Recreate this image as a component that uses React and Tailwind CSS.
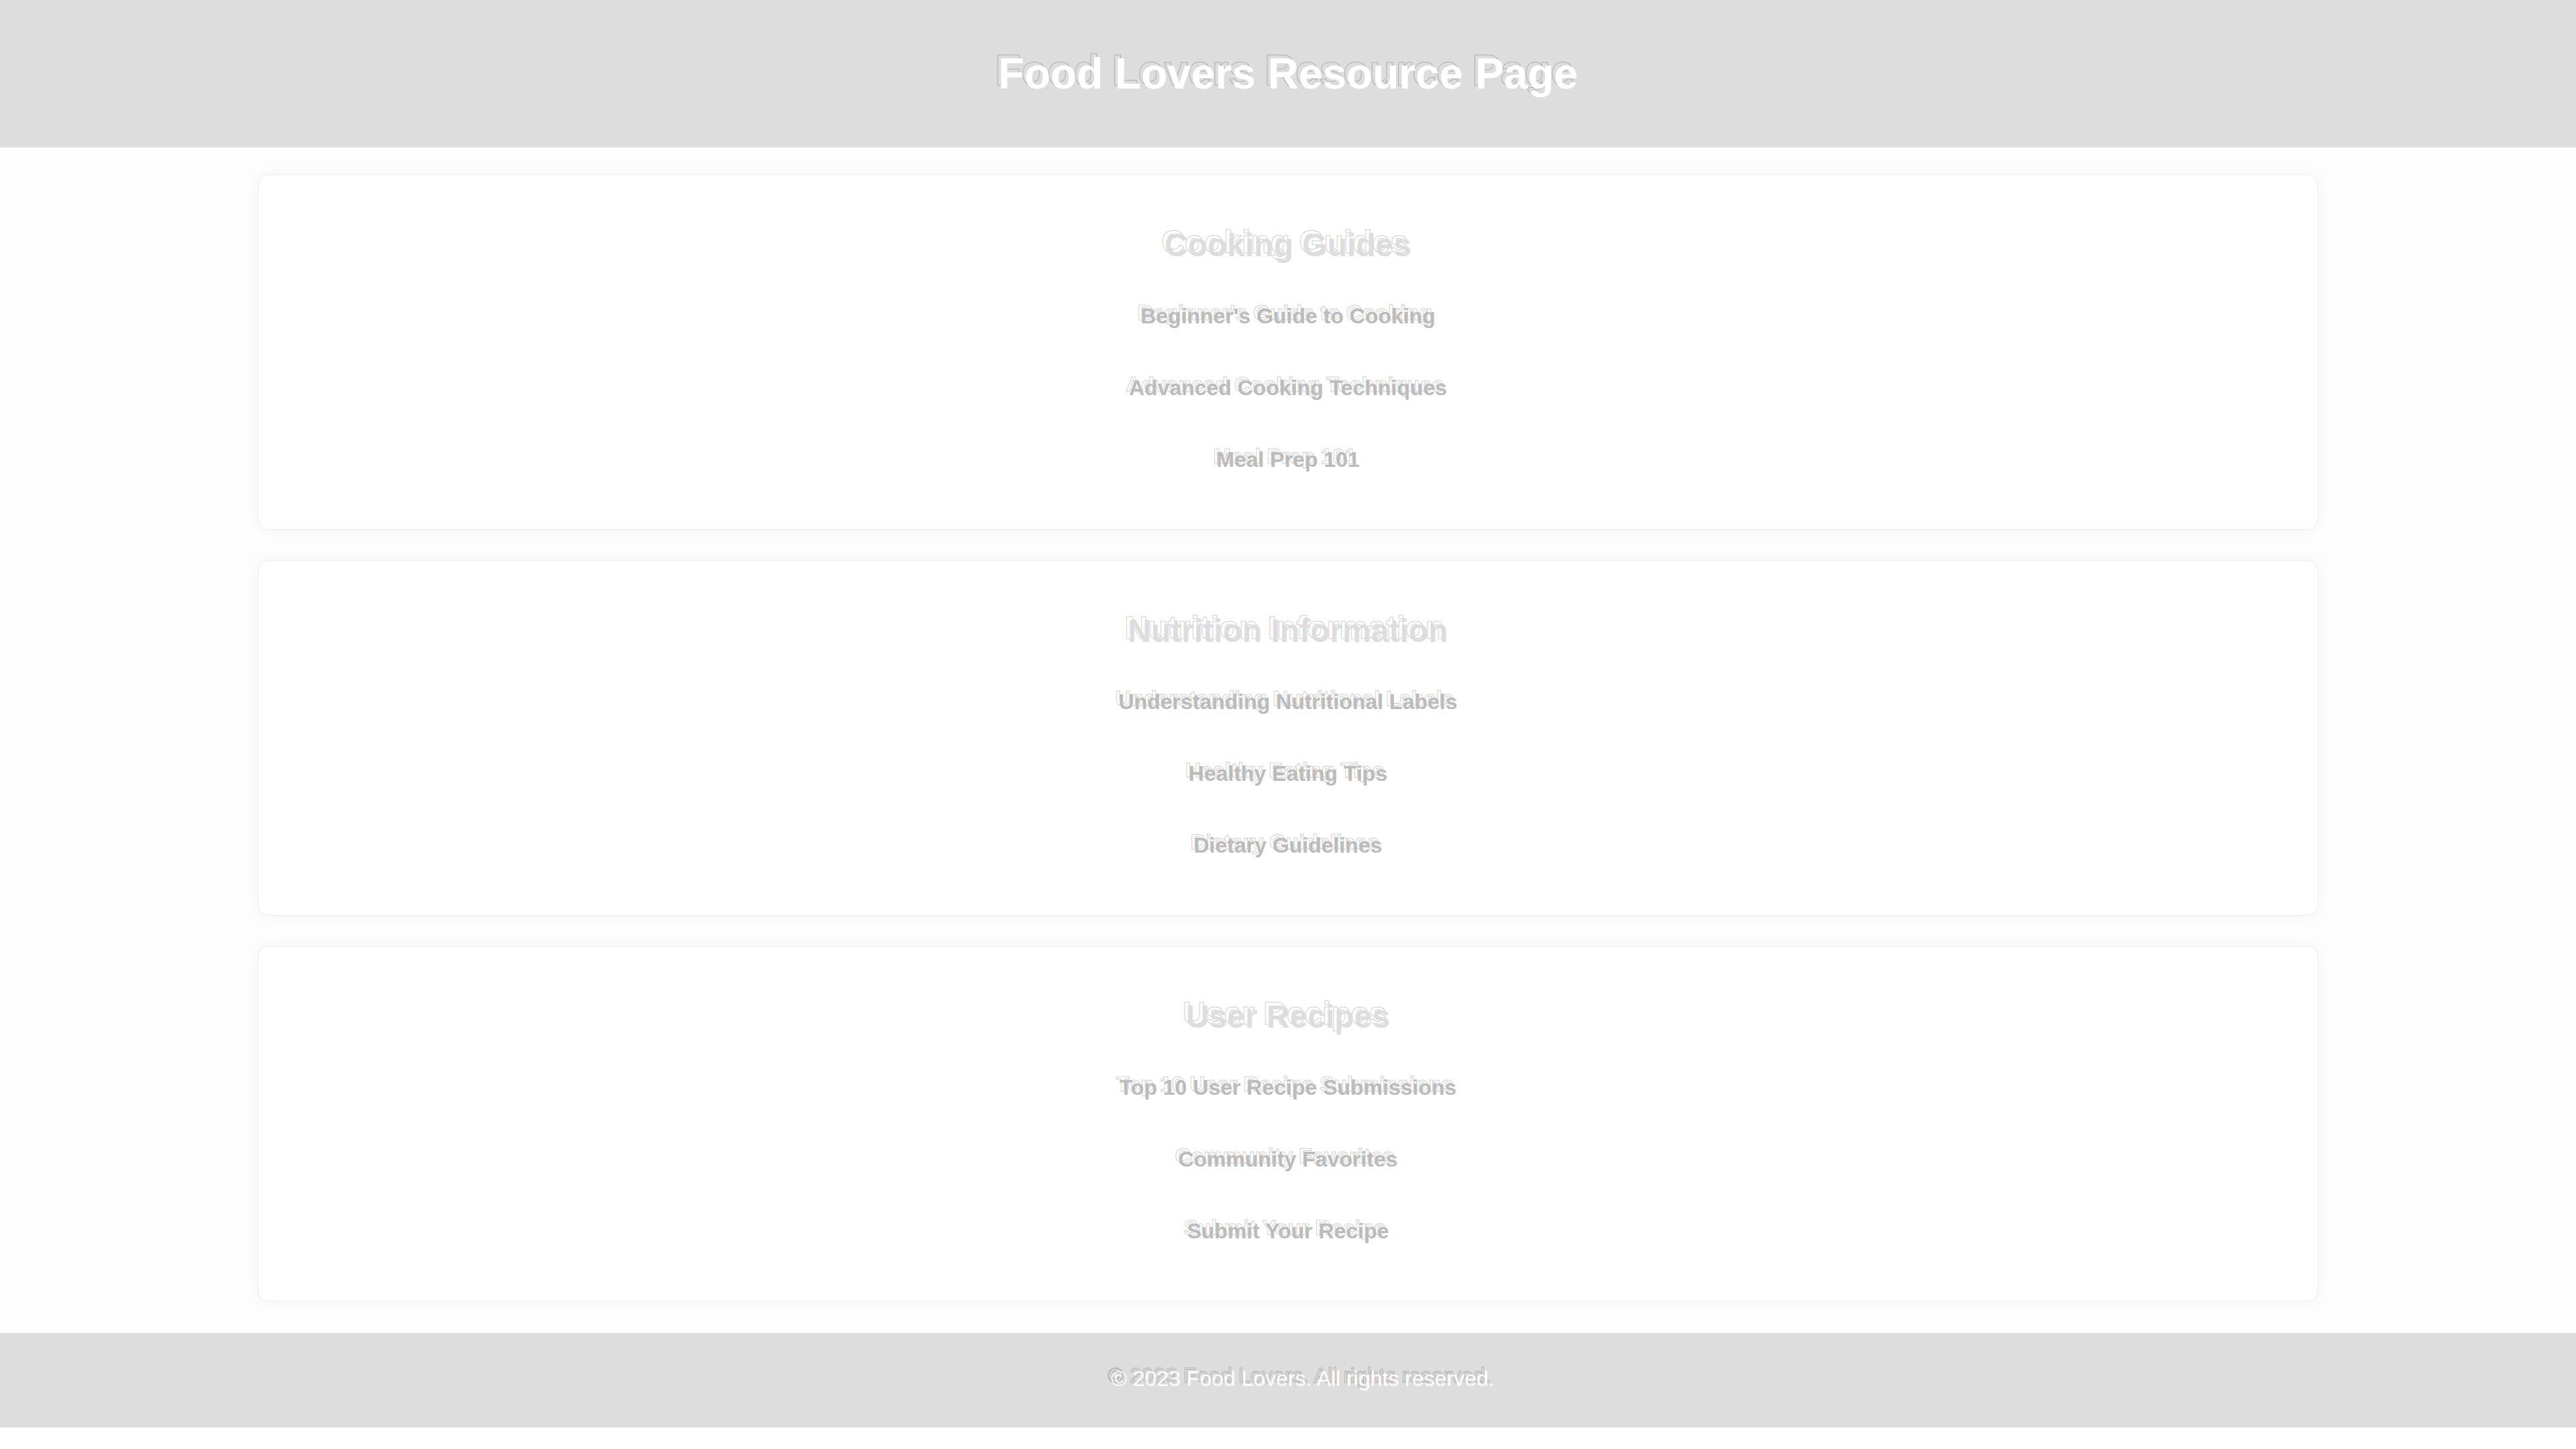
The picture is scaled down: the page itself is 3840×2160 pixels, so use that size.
import React from "react";

const sections = [
  {
    title: "Cooking Guides",
    links: ["Beginner's Guide to Cooking", "Advanced Cooking Techniques", "Meal Prep 101"],
  },
  {
    title: "Nutrition Information",
    links: ["Understanding Nutritional Labels", "Healthy Eating Tips", "Dietary Guidelines"],
  },
  {
    title: "User Recipes",
    links: ["Top 10 User Recipe Submissions", "Community Favorites", "Submit Your Recipe"],
  },
];

function Ghost({ text, className = "" }) {
  return (
    <span
      data-text={text}
      className={
        "relative isolate inline-block whitespace-nowrap before:content-[attr(data-text)] before:absolute before:left-[-5px] before:top-[-5px] before:-z-10 before:whitespace-nowrap before:text-transparent before:[-webkit-text-stroke:1px_rgba(0,0,0,0.22)] " +
        className
      }
    >
      {text}
    </span>
  );
}

export default function App() {
  return (
    <div className="min-h-[2160px] bg-white font-['Liberation_Sans',Arial,sans-serif]">
      <header className="bg-[#dddddd] pt-[73px] pb-[73px] text-center">
        <h1 className="text-[64px] leading-[74px] font-bold text-white">
          <Ghost text="Food Lovers Resource Page" />
        </h1>
      </header>
      <main className="bg-[#fdfdfd] pt-[40px] pb-[47px] flex flex-col gap-[45px]">
        {sections.map((s) => (
          <section
            key={s.title}
            className="mx-auto w-[3072px] h-[530px] bg-white rounded-[16px] border border-[#ececec] shadow-[0_0_20px_rgba(0,0,0,0.04)] pt-[77px] flex flex-col items-center text-center"
          >
            <h2 className="text-[48px] leading-[55px] font-bold text-[#dddddd]">
              <Ghost text={s.title} />
            </h2>
            <ul className="mt-[60px] flex flex-col gap-[70px]">
              {s.links.map((l) => (
                <li key={l} className="text-[32px] leading-[37px] font-bold text-[#bbbbbb]">
                  <a href="#" className="no-underline">
                    <Ghost text={l} />
                  </a>
                </li>
              ))}
            </ul>
          </section>
        ))}
      </main>
      <footer className="bg-[#dddddd] pt-[50px] pb-[54px] pl-[44px] text-center">
        <p className="text-[32px] leading-[37px] text-white">
          <Ghost text="© 2023 Food Lovers. All rights reserved." />
        </p>
      </footer>
    </div>
  );
}
